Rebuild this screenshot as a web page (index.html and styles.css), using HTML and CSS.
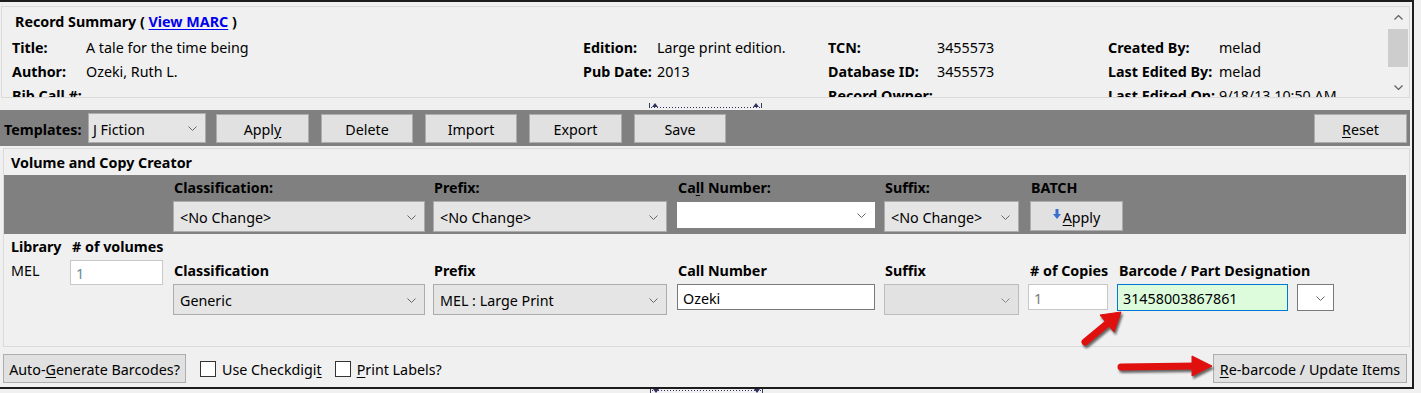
FILE: index.html
```html
<!DOCTYPE html>
<html lang="en">
<head>
<meta charset="utf-8">
<title>Volume and Copy Creator</title>
<link rel="stylesheet" href="styles.css">
</head>
<body>
<div class="window">
  <section class="summary">
    <div class="summary-box">
      <div class="summary-content">
        <div class="summary-title">Record Summary ( <a href="#" class="marc-link">View MARC</a> )</div>
        <div class="summary-grid">
          <b>Title:</b><span>A tale for the time being</span><b>Edition:</b><span>Large print edition.</span><b>TCN:</b><span>3455573</span><b>Created By:</b><span>melad</span>
          <b>Author:</b><span>Ozeki, Ruth L.</span><b>Pub Date:</b><span>2013</span><b>Database ID:</b><span>3455573</span><b>Last Edited By:</b><span>melad</span>
          <b>Bib Call #:</b><span></span><span></span><span></span><b>Record Owner:</b><span></span><b>Last Edited On:</b><span>9/18/13 10:50 AM</span>
        </div>
      </div>
      <div class="scrollbar">
        <span class="sb-arrow"><svg width="9" height="5" viewBox="0 0 9 5"><polyline points="0.5,4.5 4.5,0.5 8.5,4.5" fill="none" stroke="#606060" stroke-width="1.2"/></svg></span>
        <span class="sb-thumb"></span>
        <span class="sb-fill"></span>
        <span class="sb-arrow"><svg width="9" height="5" viewBox="0 0 9 5"><polyline points="0.5,0.5 4.5,4.5 8.5,0.5" fill="none" stroke="#606060" stroke-width="1.2"/></svg></span>
      </div>
    </div>
  </section>

  <div class="splitter"><span class="grip grip-top"></span></div>

  <div class="templates-bar">
    <b class="tpl-label">Templates:</b>
    <span class="select tpl-select">J Fiction<svg class="chev" width="9" height="5" viewBox="0 0 9 5"><polyline points="0.5,0.5 4.5,4.5 8.5,0.5" fill="none" stroke="#666" stroke-width="1"/></svg></span>
    <span class="btn tpl-btn b-apply">Appl<u>y</u></span>
    <span class="btn tpl-btn b-delete">Delete</span>
    <span class="btn tpl-btn b-import">Import</span>
    <span class="btn tpl-btn b-export">Export</span>
    <span class="btn tpl-btn b-save">Save</span>
    <span class="btn tpl-btn reset-btn"><u>R</u>eset</span>
  </div>

  <section class="creator">
    <div class="creator-title">Volume and Copy Creator</div>
    <div class="batch-band">
      <div class="field f-class">
        <b class="flabel">Classification:</b>
        <span class="select">&lt;No Change&gt;<svg class="chev" width="9" height="5" viewBox="0 0 9 5"><polyline points="0.5,0.5 4.5,4.5 8.5,0.5" fill="none" stroke="#666" stroke-width="1"/></svg></span>
      </div>
      <div class="field f-prefix">
        <b class="flabel">Prefix:</b>
        <span class="select">&lt;No Change&gt;<svg class="chev" width="9" height="5" viewBox="0 0 9 5"><polyline points="0.5,0.5 4.5,4.5 8.5,0.5" fill="none" stroke="#666" stroke-width="1"/></svg></span>
      </div>
      <div class="field f-call">
        <b class="flabel">Ca<u>l</u>l Number:</b>
        <span class="combo"><svg class="chev" width="9" height="5" viewBox="0 0 9 5"><polyline points="0.5,0.5 4.5,4.5 8.5,0.5" fill="none" stroke="#666" stroke-width="1"/></svg></span>
      </div>
      <div class="field f-suffix">
        <b class="flabel">Suffix:</b>
        <span class="select">&lt;No Change&gt;<svg class="chev" width="9" height="5" viewBox="0 0 9 5"><polyline points="0.5,0.5 4.5,4.5 8.5,0.5" fill="none" stroke="#666" stroke-width="1"/></svg></span>
      </div>
      <div class="field f-batch">
        <b class="flabel">BATCH</b>
        <span class="btn batch-btn"><svg class="down-arrow" width="8" height="10" viewBox="0 0 8 10"><path d="M2.5 0 H5.5 V5 H8 L4 10 L0 5 H2.5 Z" fill="#3a6fd0"/></svg><u>A</u>pply</span>
      </div>
    </div>

    <div class="copy-row">
      <div class="lib-col">
        <b class="rlabel">Library</b>
        <span class="rtext">MEL</span>
      </div>
      <div class="vol-col">
        <b class="rlabel vol-label"># of volumes</b>
        <span class="input vol-input">1</span>
      </div>
      <div class="field r-class">
        <b class="flabel">Classification</b>
        <span class="select">Generic<svg class="chev" width="9" height="5" viewBox="0 0 9 5"><polyline points="0.5,0.5 4.5,4.5 8.5,0.5" fill="none" stroke="#666" stroke-width="1"/></svg></span>
      </div>
      <div class="field r-prefix">
        <b class="flabel">Prefix</b>
        <span class="select">MEL : Large Print<svg class="chev" width="9" height="5" viewBox="0 0 9 5"><polyline points="0.5,0.5 4.5,4.5 8.5,0.5" fill="none" stroke="#666" stroke-width="1"/></svg></span>
      </div>
      <div class="field r-call">
        <b class="flabel">Call Number</b>
        <span class="input call-input">Ozeki</span>
      </div>
      <div class="field r-suffix">
        <b class="flabel">Suffix</b>
        <span class="select disabled"><svg class="chev" width="9" height="5" viewBox="0 0 9 5"><polyline points="0.5,0.5 4.5,4.5 8.5,0.5" fill="none" stroke="#888" stroke-width="1"/></svg></span>
      </div>
      <div class="field r-copies">
        <b class="flabel"># of Copies</b>
        <span class="input copies-input">1</span>
      </div>
      <div class="field r-barcode">
        <b class="flabel">Barcode / Part Designation</b>
        <span class="input barcode-input">31458003867861</span>
      </div>
      <div class="field r-part">
        <span class="combo part-combo"><svg class="chev" width="9" height="5" viewBox="0 0 9 5"><polyline points="0.5,0.5 4.5,4.5 8.5,0.5" fill="none" stroke="#666" stroke-width="1"/></svg></span>
      </div>
    </div>
  </section>

  <div class="footer">
    <span class="btn auto-btn">Auto-<u>G</u>enerate Barcodes?</span>
    <label class="check check-first"><span class="box"></span>Use Checkdigi<u>t</u></label>
    <label class="check"><span class="box"></span><u>P</u>rint Labels?</label>
    <span class="btn rebarcode-btn"><u>R</u>e-barcode / Update Items</span>
  </div>
</div>
<div class="below"><span class="grip grip-bottom"></span></div>

<svg class="annotations" width="1421" height="393" viewBox="0 0 1421 393">
  <defs>
    <filter id="shadow" x="-20%" y="-20%" width="140%" height="140%">
      <feGaussianBlur stdDeviation="1.2"/>
    </filter>
  </defs>
  <g filter="url(#shadow)" fill="#3a3a3a" stroke="#3a3a3a" opacity="0.75" transform="translate(1.5,2.5)">
    <line x1="1085" y1="342" x2="1108" y2="323" stroke-width="7" stroke-linecap="round"/>
    <polygon points="1100,315 1121,312 1114,332" stroke-width="1" stroke-linejoin="round"/>
    <line x1="1121" y1="367" x2="1196" y2="366" stroke-width="7" stroke-linecap="round"/>
    <polygon points="1192,356 1212,366 1192,376" stroke-width="1" stroke-linejoin="round"/>
  </g>
  <g fill="#e0100f" stroke="#e0100f">
    <line x1="1085" y1="342" x2="1108" y2="323" stroke-width="7" stroke-linecap="round"/>
    <polygon points="1100,315 1121,312 1114,332" stroke-width="1" stroke-linejoin="round"/>
    <line x1="1121" y1="367" x2="1196" y2="366" stroke-width="7" stroke-linecap="round"/>
    <polygon points="1192,356 1212,366 1192,376" stroke-width="1" stroke-linejoin="round"/>
  </g>
</svg>
</body>
</html>
```

FILE: styles.css
```css
* { box-sizing: border-box; }

html, body {
  margin: 0;
  padding: 0;
}

body {
  width: 1421px;
  height: 393px;
  overflow: hidden;
  position: relative;
  background: #f0f0f0;
  font-family: "Noto Sans", "Open Sans", "DejaVu Sans", sans-serif;
  font-size: 14.3px;
  color: #000;
}

b { font-weight: 700; }
u { text-decoration: underline; text-underline-offset: 2px; }

.window {
  width: 1414px;
  height: 389px;
  border-top: 2px solid #1c1c1c;
  border-right: 2px solid #1c1c1c;
  border-bottom: 2px solid #1c1c1c;
  display: flex;
  flex-direction: column;
}

/* ---------- Record summary ---------- */
.summary {
  padding: 4px 2px 0 1px;
  height: 96px;
}

.summary-box {
  height: 92px;
  border: 1px solid #dadada;
  display: flex;
  background: #f0f0f0;
}

.summary-content {
  flex: 1;
  overflow: hidden;
  padding-left: 10px;
  padding-top: 1px;
}

.summary-title {
  height: 28px;
  line-height: 28px;
  padding-left: 3px;
  font-weight: 700;
}

.marc-link {
  color: #0000ee;
  text-decoration: underline;
  text-underline-offset: 2px;
}

.summary-grid {
  display: grid;
  grid-template-columns: 74px 497px 74px 171px 109px 171px 111px 1fr;
  grid-auto-rows: 24px;
  line-height: 24px;
  white-space: nowrap;
}

.scrollbar {
  width: 20px;
  margin-right: 1px;
  display: flex;
  flex-direction: column;
  background: #f0f0f0;
}

.sb-arrow {
  height: 20px;
  display: flex;
  align-items: center;
  justify-content: center;
}

.sb-thumb {
  height: 38px;
  margin-top: 2px;
  background: #cdcdcd;
}

.sb-fill { flex: 1; }

/* ---------- Splitters ---------- */
.splitter {
  height: 12px;
  display: flex;
  justify-content: center;
  align-items: flex-end;
  padding-right: 2px;
}

.grip {
  width: 113px;
  height: 5px;
  border-left: 1px solid #3a3a5a;
  border-right: 1px solid #3a3a5a;
  position: relative;
  background-image: radial-gradient(circle, #303060 0.7px, transparent 0.9px);
  background-size: 3px 3px;
  background-repeat: repeat-x;
}

.grip-top {
  margin-bottom: 2px;
  background-position: 0 3px;
}

.grip-top::before,
.grip-top::after {
  content: "";
  position: absolute;
  top: 0;
  border-left: 3px solid transparent;
  border-right: 3px solid transparent;
  border-bottom: 4px solid #303060;
}
.grip-top::before { left: 2px; }
.grip-top::after { right: 2px; }

.below {
  height: 4px;
  display: flex;
  justify-content: center;
  padding-right: 9px;
}

.grip-bottom {
  height: 4px;
  background-position: 0 0;
}

.grip-bottom::before,
.grip-bottom::after {
  content: "";
  position: absolute;
  top: 0;
  border-left: 3px solid transparent;
  border-right: 3px solid transparent;
  border-top: 4px solid #303060;
}
.grip-bottom::before { left: 2px; }
.grip-bottom::after { right: 2px; }

/* ---------- Controls ---------- */
.btn {
  display: flex;
  align-items: center;
  justify-content: center;
  background: #e1e1e1;
  border: 1px solid #adadad;
  white-space: nowrap;
  padding-top: 2px;
}

.select {
  display: flex;
  align-items: center;
  background: #e5e5e5;
  border: 1px solid #acacac;
  padding-left: 6px;
  padding-top: 2px;
  white-space: nowrap;
  position: relative;
}

.select .chev,
.combo .chev {
  position: absolute;
  right: 8px;
  top: 50%;
  margin-top: -2px;
}

.select.disabled {
  background: #e2e2e2;
  border-color: #bcbcbc;
}

.combo {
  display: block;
  position: relative;
  background: #fff;
  border: 1px solid #7a7a7a;
}

.input {
  display: flex;
  align-items: center;
  background: #fff;
  border: 1px solid #c8c8c8;
  padding-left: 5px;
  padding-top: 2px;
  white-space: nowrap;
}

/* ---------- Templates bar ---------- */
.templates-bar {
  height: 36px;
  margin-right: 2px;
  background: #808080;
  display: flex;
  align-items: center;
  padding-left: 4px;
}

.tpl-label {
  width: 84px;
  padding-top: 2px;
}

.tpl-select {
  width: 118px;
  height: 30px;
  padding-left: 4px;
  margin-right: 10px;
}

.tpl-btn {
  height: 29px;
  margin-right: 12px;
}

.b-apply { width: 93px; }
.b-delete { width: 92px; }
.b-import { width: 92px; }
.b-export { width: 93px; }
.b-save { width: 92px; }

.reset-btn {
  width: 93px;
  margin-left: auto;
  margin-right: 3px;
}

/* ---------- Creator panel ---------- */
.creator {
  height: 199px;
  margin: 2px 2px 0 3px;
  border: 1px solid #dadada;
}

.creator-title {
  height: 26px;
  line-height: 24px;
  padding-top: 2px;
  padding-left: 7px;
  font-weight: 700;
}

.batch-band {
  height: 59px;
  margin-right: 3px;
  background: #808080;
  display: flex;
  padding-left: 169px;
}

.field {
  display: flex;
  flex-direction: column;
}

.flabel {
  height: 24px;
  line-height: 22px;
  padding-top: 2px;
  padding-left: 1px;
  margin-bottom: 2px;
  white-space: nowrap;
}

.batch-band .select { height: 31px; }

.f-class { width: 252px; margin-right: 8px; }
.f-prefix { width: 234px; margin-right: 10px; }
.f-call { width: 198px; margin-right: 9px; }
.f-call .combo { height: 26px; margin-top: 1px; border-color: #fff; }
.f-suffix { width: 135px; margin-right: 11px; }
.f-batch { width: 93px; }
.f-batch .batch-btn { height: 30px; }

.down-arrow { margin-right: 2px; margin-top: -6px; }

/* row 2 */
.copy-row {
  display: flex;
  padding-left: 7px;
}

.lib-col {
  width: 59px;
  display: flex;
  flex-direction: column;
}

.rlabel,
.rtext {
  height: 24px;
  line-height: 22px;
  padding-top: 2px;
  white-space: nowrap;
}

.vol-col {
  width: 103px;
  display: flex;
  flex-direction: column;
}

.vol-label { padding-left: 2px; }

.vol-input {
  width: 93px;
  height: 25px;
  margin-top: 2px;
  color: #5f8a98;
}

.copy-row .field { padding-top: 24px; }

.r-class { width: 252px; margin-right: 8px; }
.r-prefix { width: 234px; margin-right: 10px; }
.r-call { width: 198px; margin-right: 9px; }
.r-suffix { width: 135px; margin-right: 9px; }
.r-copies { width: 80px; margin-right: 9px; }
.r-barcode { width: 171px; margin-right: 9px; }
.copy-row .r-part { width: 37px; padding-top: 50px; }

.r-class .select,
.r-prefix .select,
.r-suffix .select { height: 31px; }

.call-input {
  height: 26px;
  border-color: #7a7a7a;
}

.copies-input {
  height: 26px;
  color: #7a7a7a;
}

.r-copies .flabel,
.r-barcode .flabel { padding-left: 2px; }

.barcode-input {
  height: 27px;
  background: #dcfcdc;
  border-color: #0078d7;
}

.part-combo {
  height: 27px;
  border-color: #7a7a7a;
}

/* ---------- Footer ---------- */
.footer {
  height: 40px;
  display: flex;
  align-items: flex-start;
  padding: 7px 5px 0 3px;
}

.auto-btn {
  width: 183px;
  height: 29px;
  margin-right: 14px;
}

.check {
  display: flex;
  align-items: center;
  height: 29px;
  padding-top: 2px;
  margin-right: 16px;
  white-space: nowrap;
}

.check-first { margin-right: 13px; }

.check .box {
  width: 16px;
  height: 16px;
  background: #fff;
  border: 1px solid #333;
  margin-right: 6px;
  margin-top: -2px;
}

.rebarcode-btn {
  width: 194px;
  height: 29px;
  margin-left: auto;
}

/* ---------- Annotations ---------- */
.annotations {
  position: absolute;
  left: 0;
  top: 0;
  pointer-events: none;
}
```
